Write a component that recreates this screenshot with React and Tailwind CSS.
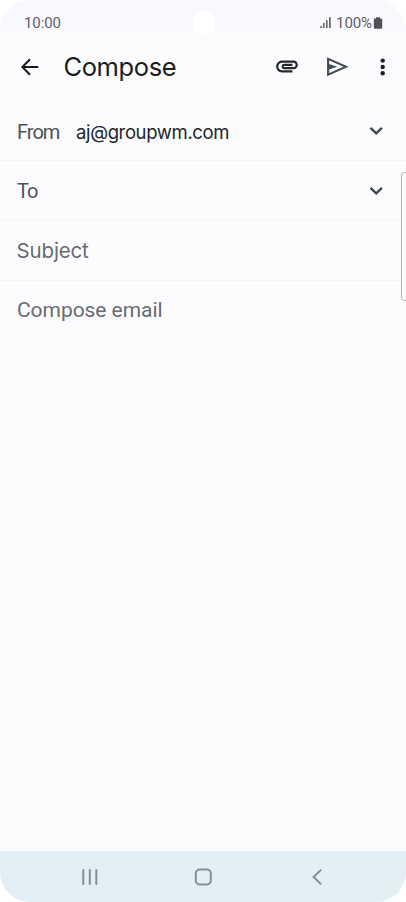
import React from "react";

function Chevron() {
  return (
    <svg className="block h-4 w-4" viewBox="0 0 16 16" fill="none" stroke="#3c464b" strokeWidth="2.3">
      <path d="M2.5 4.8 8.2 10.3 13.9 4.8" />
    </svg>
  );
}

function StatusBar() {
  return (
    <div className="flex h-[31px] items-start bg-[#f9f8fe] pl-[24px] pr-[23px] pt-[13px] font-['Roboto',sans-serif] text-[15px] leading-[20px] text-[#606165]">
      <span className="w-[169px] tracking-[-0.1px]">10:00</span>
      <span className="-mt-[1px] h-[22px] w-[22px] rounded-full bg-white" />
      <svg className="ml-auto mr-[4px] mt-[3px] block h-[13px] w-[12px]" viewBox="0 0 12 13" fill="#66676b">
        <rect x="0.3" y="10" width="1.6" height="2" />
        <rect x="3" y="7" width="1.6" height="5" />
        <rect x="6" y="4.2" width="1.6" height="7.8" />
        <rect x="9" y="1.2" width="1.8" height="10.8" />
      </svg>
      <span className="tracking-[-0.1px]">100%</span>
      <svg className="ml-[1px] mt-[4px] block h-[13px] w-[10px]" viewBox="0 0 10 13" fill="#505155">
        <path d="M3 0.3h4V1.5h1a1.2 1.2 0 0 1 1.2 1.2v7.8A1.2 1.2 0 0 1 8 11.7H2A1.2 1.2 0 0 1 .8 10.5V2.7A1.2 1.2 0 0 1 2 1.5h1z" />
      </svg>
    </div>
  );
}

function Header() {
  return (
    <header className="flex h-[70px] items-center pl-[20px] pr-[15px]">
      <svg className="mt-[1px] block h-5 w-5" viewBox="0 0 20 20" fill="none" stroke="#171b1f" strokeWidth="2">
        <path d="M18.3 10H3M10 2.2 2.4 10 10 17.8" />
      </svg>
      <h1 className="ml-[23.5px] mt-[2px] w-[160.5px] whitespace-nowrap font-['Inter',sans-serif] text-[25.5px] font-normal leading-[36px] tracking-[-0.4px] text-[#1a1d20]">Compose</h1>
      <svg className="ml-[50px] block h-[26px] w-[26px]" viewBox="0 0 24 24" fill="#23282d">
        <path d="M2 12.5C2 9.46 4.46 7 7.5 7H18c2.21 0 4 1.79 4 4s-1.79 4-4 4H9.5C8.12 15 7 13.88 7 12.5S8.12 10 9.5 10H17v2H9.41c-.55 0-.55 1 0 1H18c1.1 0 2-.9 2-2s-.9-2-2-2H7.5C5.57 9 4 10.57 4 12.5S5.57 16 7.5 16H17v2H7.5C4.46 18 2 15.54 2 12.5z" />
      </svg>
      <svg className="ml-[26px] mt-[1px] block h-[20px] w-[22px]" viewBox="0 0 22 20">
        <path d="M2.1 1.9V17.7L20 9.8z" fill="none" stroke="#444d55" strokeWidth="2.1" />
        <path d="M2 6.8 11.4 9.8 2 12.8z" fill="#444d55" />
      </svg>
      <svg className="ml-auto mt-[1px] block h-[20px] w-[16px]" viewBox="0 0 16 20" fill="#1b1f23">
        <circle cx="7.7" cy="3.6" r="2.2" />
        <circle cx="7.7" cy="10" r="2.2" />
        <circle cx="7.7" cy="16.3" r="2.2" />
      </svg>
    </header>
  );
}

function NavBar() {
  return (
    <nav className="flex h-[51px] items-center justify-between bg-[#e3eff5] px-[80px]">
      <svg className="block h-5 w-5" viewBox="0 0 20 20" fill="none" stroke="#868e94" strokeWidth="2" strokeLinecap="round">
        <path d="M3.3 3v14M9.8 3v14M16.3 3v14" />
      </svg>
      <svg className="block h-5 w-5" viewBox="0 0 20 20" fill="none" stroke="#868e94" strokeWidth="2">
        <rect x="2.8" y="2.5" width="15" height="15" rx="4" />
      </svg>
      <svg className="block h-5 w-5" viewBox="0 0 20 20" fill="none" stroke="#868e94" strokeWidth="2">
        <path d="M15.2 2.6 7.6 10l7.6 7.4" />
      </svg>
    </nav>
  );
}

export default function App() {
  return (
    <div className="h-[902px] w-[406px] overflow-hidden bg-white">
      <div className="relative flex h-full w-full flex-col overflow-hidden rounded-[30px] bg-[#fcfcff]">
        <StatusBar />
        <Header />
        <main className="flex-1 font-['Roboto',sans-serif] text-[20px] leading-[28px]">
          <div className="flex h-[60px] items-center border-b border-[#f4f4f7] pl-[17px] pr-[22px]">
            <span className="mt-[2px] w-[59px] tracking-[-1px] text-[#4a5258]">From</span>
            <span className="mt-[2px] whitespace-nowrap font-['Inter',sans-serif] text-[18.5px] font-normal tracking-[-0.37px] text-[#22262a]">aj@groupwm.com</span>
            <span className="ml-auto"><Chevron /></span>
          </div>
          <div className="flex h-[60px] items-center border-b border-[#f4f4f7] pl-[17px] pr-[22px]">
            <span className="tracking-[-0.9px] text-[#4a5258]">To</span>
            <span className="ml-auto"><Chevron /></span>
          </div>
          <div className="flex h-[60px] items-center border-b border-[#f4f4f7] pl-[16.5px]">
            <span className="font-['Inter',sans-serif] text-[20.5px] tracking-[-0.15px] text-[#676c72]">Subject</span>
          </div>
          <div className="flex h-[58px] items-center pl-[17px]">
            <span className="whitespace-nowrap text-[21px] tracking-[-0.05px] text-[#676c72]">Compose email</span>
          </div>
        </main>
        <NavBar />
        <div className="absolute -right-[4px] top-[172px] h-[129px] w-[9px] rounded-[4px] border border-[#aeb0b2] bg-[#fcfcff]" />
      </div>
    </div>
  );
}
